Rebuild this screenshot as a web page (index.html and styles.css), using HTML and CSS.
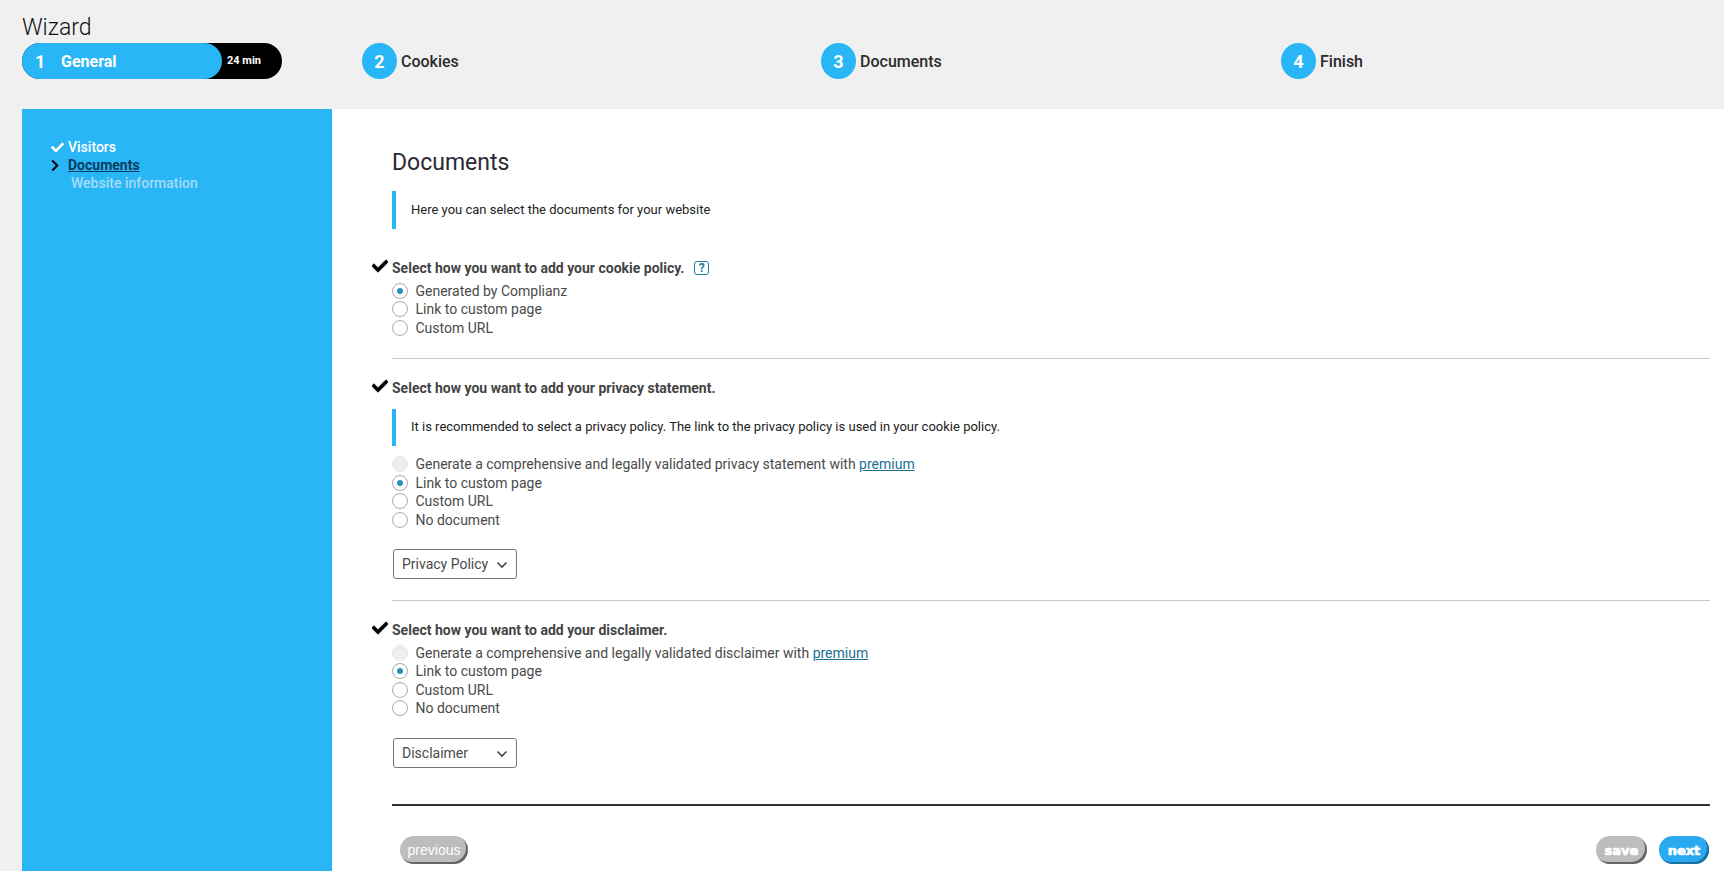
FILE: index.html
```html
<!DOCTYPE html>
<html lang="en">
<head>
<meta charset="utf-8">
<title>Wizard</title>
<link rel="stylesheet" href="styles.css">
</head>
<body>
<header class="top">
  <h1 class="title">Wizard</h1>
  <nav class="steps">
    <div class="step-first">
      <div class="pill"><span class="pill-num">1</span><span class="pill-name">General</span></div>
      <span class="pill-time">24 min</span>
    </div>
    <div class="step"><span class="circle">2</span><span class="step-name">Cookies</span></div>
    <div class="step"><span class="circle">3</span><span class="step-name">Documents</span></div>
    <div class="step"><span class="circle">4</span><span class="step-name">Finish</span></div>
  </nav>
</header>
<div class="layout">
  <aside class="side">
    <div class="side-item"><svg class="side-icon" viewBox="0 0 512 512" preserveAspectRatio="xMinYMid"><path fill="#fff" d="M173.898 439.404l-166.4-166.4c-9.997-9.997-9.997-26.206 0-36.204l36.203-36.204c9.997-9.998 26.207-9.998 36.204 0L192 312.69 432.095 72.596c9.997-9.997 26.207-9.997 36.204 0l36.203 36.204c9.997 9.997 9.997 26.206 0 36.204l-294.4 294.401c-9.998 9.997-26.207 9.997-36.204-.001z"/></svg><span class="side-done">Visitors</span></div>
    <div class="side-item"><svg class="side-icon" viewBox="0 0 320 512" preserveAspectRatio="xMinYMid"><path fill="#000" d="M285.476 272.971L91.132 467.314c-9.373 9.373-24.569 9.373-33.941 0l-22.667-22.667c-9.357-9.357-9.375-24.522-.04-33.901L188.505 256 34.484 101.255c-9.335-9.379-9.317-24.544.04-33.901l22.667-22.667c9.373-9.373 24.569-9.373 33.941 0L285.475 239.03c9.373 9.372 9.373 24.568.001 33.941z"/></svg><a class="side-current" href="#">Documents</a></div>
    <div class="side-item side-next">Website information</div>
  </aside>
  <main class="main">
    <h2 class="page-title">Documents</h2>
    <p class="notice notice-first">Here you can select the documents for your website</p>

    <section class="field field-cookie">
      <h3 class="field-title field-title-gap"><svg class="tick" viewBox="0 0 512 512"><path d="M173.898 439.404l-166.4-166.4c-9.997-9.997-9.997-26.206 0-36.204l36.203-36.204c9.997-9.998 26.207-9.998 36.204 0L192 312.69 432.095 72.596c9.997-9.997 26.207-9.997 36.204 0l36.203 36.204c9.997 9.997 9.997 26.206 0 36.204l-294.4 294.401c-9.998 9.997-26.207 9.997-36.204-.001z"/></svg>Select how you want to add your cookie policy.<span class="help">?</span></h3>
      <div class="radio-row"><span class="radio radio-on"></span>Generated by Complianz</div>
      <div class="radio-row"><span class="radio"></span>Link to custom page</div>
      <div class="radio-row"><span class="radio"></span>Custom URL</div>
    </section>

    <section class="field field-privacy">
      <h3 class="field-title"><svg class="tick" viewBox="0 0 512 512"><path d="M173.898 439.404l-166.4-166.4c-9.997-9.997-9.997-26.206 0-36.204l36.203-36.204c9.997-9.998 26.207-9.998 36.204 0L192 312.69 432.095 72.596c9.997-9.997 26.207-9.997 36.204 0l36.203 36.204c9.997 9.997 9.997 26.206 0 36.204l-294.4 294.401c-9.998 9.997-26.207 9.997-36.204-.001z"/></svg>Select how you want to add your privacy statement.</h3>
      <p class="notice notice-inner">It is recommended to select a privacy policy. The link to the privacy policy is used in your cookie policy.</p>
      <div class="radio-row"><span class="radio radio-off"></span>Generate a comprehensive and legally validated privacy statement with&nbsp;<a href="#" class="link">premium</a></div>
      <div class="radio-row"><span class="radio radio-on"></span>Link to custom page</div>
      <div class="radio-row"><span class="radio"></span>Custom URL</div>
      <div class="radio-row"><span class="radio"></span>No document</div>
      <div class="select">Privacy Policy<svg class="caret" viewBox="0 0 12 8"><path d="M1.5 1.5 6 6l4.5-4.5" fill="none" stroke="#444" stroke-width="1.6"/></svg></div>
    </section>

    <section class="field field-disclaimer">
      <h3 class="field-title field-title-gap"><svg class="tick" viewBox="0 0 512 512"><path d="M173.898 439.404l-166.4-166.4c-9.997-9.997-9.997-26.206 0-36.204l36.203-36.204c9.997-9.998 26.207-9.998 36.204 0L192 312.69 432.095 72.596c9.997-9.997 26.207-9.997 36.204 0l36.203 36.204c9.997 9.997 9.997 26.206 0 36.204l-294.4 294.401c-9.998 9.997-26.207 9.997-36.204-.001z"/></svg>Select how you want to add your disclaimer.</h3>
      <div class="radio-row"><span class="radio radio-off"></span>Generate a comprehensive and legally validated disclaimer with&nbsp;<a href="#" class="link">premium</a></div>
      <div class="radio-row"><span class="radio radio-on"></span>Link to custom page</div>
      <div class="radio-row"><span class="radio"></span>Custom URL</div>
      <div class="radio-row"><span class="radio"></span>No document</div>
      <div class="select">Disclaimer<svg class="caret" viewBox="0 0 12 8"><path d="M1.5 1.5 6 6l4.5-4.5" fill="none" stroke="#444" stroke-width="1.6"/></svg></div>
    </section>

    <footer class="actions">
      <button class="btn btn-prev">previous</button>
      <div class="actions-right">
        <button class="btn btn-heavy btn-grey">save</button>
        <button class="btn btn-heavy btn-blue">next</button>
      </div>
    </footer>
  </main>
</div>
</body>
</html>
```
FILE: styles.css
```css
* { box-sizing: border-box; }
html, body { margin: 0; height: 871px; overflow: hidden; }
body { background: #f0f0f0; font-family: Roboto, sans-serif; color: #333; }

.top { height: 109px; padding: 12px 0 0 22px; }
.title { margin: 0; font-size: 23px; font-weight: 300; line-height: 31px; height: 31px; color: #111; }
.steps { display: grid; grid-template-columns: 340px 459px 460px 1fr; }
.step-first { width: 260px; height: 36px; background: #000; border-radius: 18px; display: flex; align-items: center; }
.pill { width: 200px; height: 36px; background: #29b6f6; border-radius: 18px; display: flex; align-items: center; color: #fff; font-weight: 700; }
.pill-num { font-size: 18px; width: 39px; padding-left: 13px; }
.pill-name { font-size: 16px; }
.pill-time { color: #fff; font-size: 11px; font-weight: 700; margin-left: 5px; margin-top: -1px; }
.step { display: flex; align-items: center; height: 36px; }
.circle { width: 35px; height: 36px; border-radius: 50%; background: #29b6f6; color: #fff; font-weight: 700; font-size: 18px; display: flex; align-items: center; justify-content: center; }
.step-name { margin-left: 4px; font-size: 16px; font-weight: 500; color: #2b2b2b; }

.layout { display: flex; margin-left: 22px; height: 762px; }
.side { width: 310px; background: #29b6f6; padding: 29px 0 0 29px; flex: none; }
.side-item { display: flex; align-items: center; height: 18px; font-size: 14px; font-weight: 500; color: #fff; }
.side-icon { width: 15px; height: 13px; margin-right: 2px; flex: none; }
.side-current { color: #0b3c5d; text-decoration: underline; font-weight: 700; }
.side-next { color: #a5dcf9; padding-left: 20px; }

.main { flex: 1; background: #fff; padding: 40px 14px 0 60px; }
.page-title { margin: 0; font-size: 23px; font-weight: 400; line-height: 28px; color: #2a2a33; }
.notice { margin: 0; border-left: 4px solid #29b6f6; padding: 0 0 2px 15px; font-size: 13px; display: flex; align-items: center; color: #222; }
.notice-first { height: 38px; margin-top: 14px; }
.notice-inner { height: 37px; margin: 11px 0 9px; }

.field { position: relative; border-bottom: 1px solid #c8c8c8; }
.field-cookie { margin-top: 29px; height: 101px; }
.field-privacy { height: 242px; padding-top: 19px; }
.field-disclaimer { height: 205px; padding-top: 19px; border-bottom: 2px solid #333; }
.field-title { margin: 0; font-size: 14px; line-height: 20px; font-weight: 700; color: #444; }
.field-title-gap { margin-bottom: 3.5px; }
.tick { position: absolute; left: -20px; width: 16px; height: 16px; stroke: #000; stroke-width: 24px; }
.help { display: inline-flex; align-items: center; justify-content: center; width: 15px; height: 14px; margin-left: 10px; border: 1.5px solid #1d7a9c; border-radius: 3px; font-size: 12px; color: #1d7a9c; vertical-align: 1px; }

.radio-row { display: flex; align-items: center; height: 18.5px; font-size: 14px; color: #4a4a4a; }
.radio { width: 16px; height: 16px; border-radius: 50%; border: 1px solid #a9a9a9; background: #fff; margin-right: 7.5px; flex: none; position: relative; }
.radio-on::after { content: ""; position: absolute; left: 4px; top: 4px; width: 6px; height: 6px; border-radius: 50%; background: #2a8fb8; }
.radio-off { background: #eee; border-color: #e6e6e6; }
.link { color: #1d6f94; text-decoration: underline; }

.select { margin: 20px 0 0 1px; width: 124px; height: 30px; border: 1px solid #777; border-radius: 3px; padding: 0 8px; font-size: 14px; color: #4a4a4a; display: flex; align-items: center; justify-content: space-between; background: #fff; }
.caret { width: 12px; height: 8px; margin-top: 2px; }

.actions { display: flex; justify-content: space-between; padding: 30px 1px 0 8px; }
.actions-right { display: flex; gap: 12px; }
.btn { height: 28px; border: 0; border-radius: 14px; color: #fff; padding: 0; box-shadow: inset -2px -2px 0 #666; }
.btn-prev { width: 68px; background: #bdbdbd; font-family: "Liberation Sans", sans-serif; font-size: 14px; }
.btn-heavy { font-family: "DejaVu Sans", sans-serif; font-weight: 700; font-size: 13px; -webkit-text-stroke: 0.7px #fff; }
.btn-grey { width: 51px; background: #bdbdbd; }
.btn-blue { width: 50px; background: #29aaf0; box-shadow: inset -2px -2px 0 #1b6f9c; }
```
